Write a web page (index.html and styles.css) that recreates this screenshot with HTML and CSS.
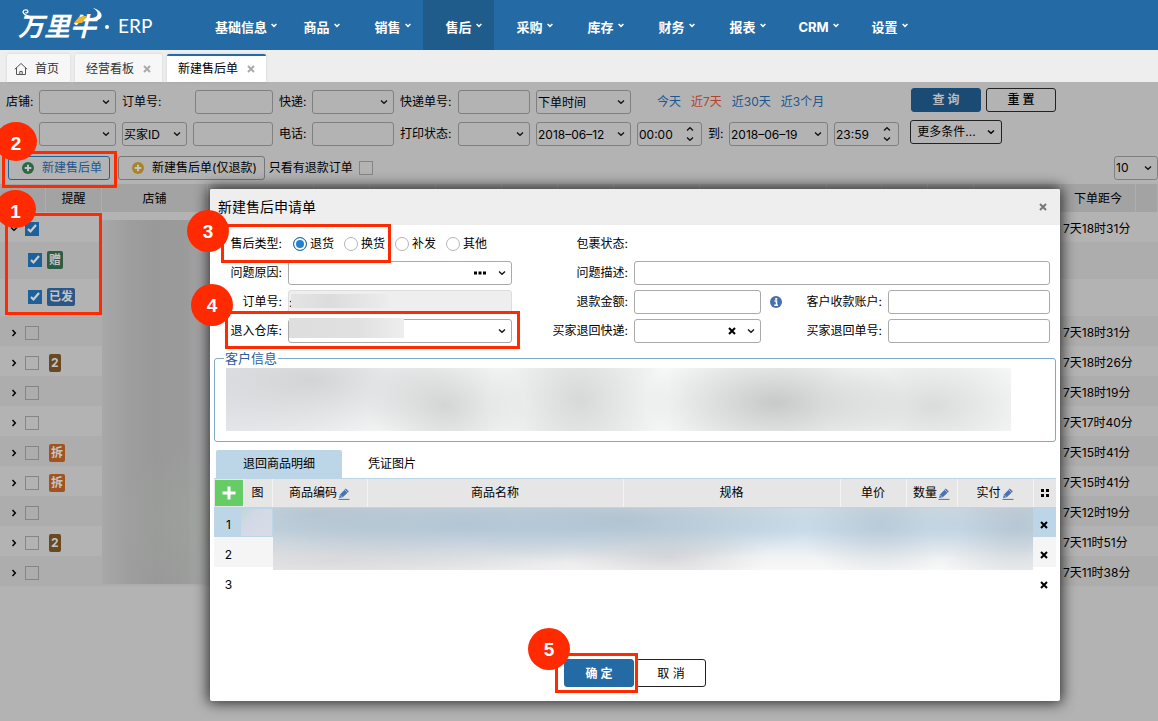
FILE: index.html
```html
<!DOCTYPE html>
<html lang="zh-CN">
<head>
<meta charset="utf-8">
<meta name="viewport" content="width=device-width, initial-scale=1">
<title>万里牛 ERP</title>
<link rel="stylesheet" href="styles.css">
</head>
<body>
<svg class="defs" aria-hidden="true">
  <symbol id="caret" viewBox="0 0 6 5"><path d="M.6 1 3 3.4 5.4 1" fill="none" stroke="currentColor" stroke-width="1.5"/></symbol>
  <symbol id="right" viewBox="0 0 8 8"><path d="M2.5 1 5.3 4 2.5 7" fill="none" stroke="currentColor" stroke-width="1.5"/></symbol>
  <symbol id="down" viewBox="0 0 8 8"><path d="M1 2.5 4 5.3 7 2.5" fill="none" stroke="currentColor" stroke-width="1.4"/></symbol>
  <symbol id="cross" viewBox="0 0 8 8"><path d="M1 1 7 7M7 1 1 7" fill="none" stroke="currentColor" stroke-width="2"/></symbol>
  <symbol id="add" viewBox="0 0 12 12"><circle cx="6" cy="6" r="6" fill="currentColor"/><path d="M6 2.7V9.3M2.7 6H9.3" stroke="#c4c4c4" stroke-width="2"/></symbol>
  <symbol id="pen" viewBox="0 0 12 12"><path d="M1 10 2 6.6 7.8.6 10.9 3.6 4.8 9.3Z" fill="#4a72b0"/><path d="M2.6 7.3 4 8.8M7 2 9.600 4.600" stroke="#e6e6e6" stroke-width=".7"/><path d="M.5 11.400H11.500" stroke="#4a72b0" stroke-width="1"/></symbol>
</svg>

<header class="topbar">
  <a class="logo" href="#">
    <span class="logo-mark">万里牛<svg class="horn" viewBox="0 0 86 32" aria-hidden="true"><path d="M14 8C9 7 5 5.500 5 2.800 5.300.4 9.800.4 10 2.600 10 4 8 4.300 7.500 3.300" fill="none" stroke="#fff" stroke-width="1.300"/><path d="M75-1C80 0 84.500 4 83.500 7.500 82.500 11.500 77 12 70 11.500L71 8.800C76 9.200 79 8 79.500 5.500 80 3 78 .8 75-1Z" fill="#fff"/><path d="M56 14 60.500 8.500C63 7 66 7 69 7L64 14Z" fill="#eeb534"/></svg></span>
    <span class="logo-dot"></span>
    <span class="logo-erp">ERP</span>
  </a>
  <nav class="nav">
    <a href="#">基础信息<svg><use href="#caret"/></svg></a>
    <a href="#">商品<svg><use href="#caret"/></svg></a>
    <a href="#">销售<svg><use href="#caret"/></svg></a>
    <a href="#" class="on">售后<svg><use href="#caret"/></svg></a>
    <a href="#">采购<svg><use href="#caret"/></svg></a>
    <a href="#">库存<svg><use href="#caret"/></svg></a>
    <a href="#">财务<svg><use href="#caret"/></svg></a>
    <a href="#">报表<svg><use href="#caret"/></svg></a>
    <a href="#">CRM<svg><use href="#caret"/></svg></a>
    <a href="#">设置<svg><use href="#caret"/></svg></a>
  </nav>
</header>

<div class="tabs">
  <a class="tab home" href="#"><svg viewBox="0 0 14 14"><path d="M.8 7.200 7 1.500 13.200 7.200M2.500 6V12.500H11.500V6M5.800 12.500V9.500H8.200V12.500" fill="none" stroke="#555" stroke-width="1"/></svg>首页</a>
  <a class="tab" href="#">经营看板<svg class="x"><use href="#cross"/></svg></a>
  <a class="tab current" href="#">新建售后单<svg class="x"><use href="#cross"/></svg></a>
</div>

<main class="page">
  <form class="filters">
    <div class="fields">
      <div class="row">
        <label class="w27" for="shop">店铺:</label><select class="w77" id="shop"></select>
        <label class="w67" for="order">订单号:</label><input class="w78" id="order" type="text">
        <label class="w27" for="express">快递:</label><select class="w82" id="express"></select>
        <label class="w52" for="expno">快递单号:</label><input class="w72" id="expno" type="text">
        <select class="w95" aria-label="时间类型"><option>下单时间</option></select>
        <div class="quick"><a href="#">今天</a><a href="#" class="hot">近7天</a><a href="#">近30天</a><a href="#">近3个月</a></div>
      </div>
      <div class="row">
        <select class="w77 indent" aria-label="标记"></select>
        <select class="w65" aria-label="买家"><option>买家ID</option></select><input class="w80" type="text" aria-label="买家ID">
        <label class="w27" for="tel">电话:</label><input class="w82" id="tel" type="text">
        <label class="w52" for="print">打印状态:</label><select class="w72" id="print"></select>
        <input class="date w95" type="text" value="2018–06–12" aria-label="开始日期">
        <input class="time w65" type="text" value="00:00" aria-label="开始时间">
        <label class="w15" for="to">到:</label><input class="date w99" id="to" type="text" value="2018–06–19">
        <input class="time w65" type="text" value="23:59" aria-label="结束时间">
      </div>
    </div>
    <div class="actions">
      <div class="pair"><button type="button" class="btn solid">查 询</button><button type="button" class="btn">重 置</button></div>
      <button type="button" class="btn more">更多条件...<svg><use href="#down"/></svg></button>
    </div>
  </form>

  <div class="tools">
    <button type="button" class="tool primary"><svg><use href="#add"/></svg>新建售后单</button>
    <button type="button" class="tool"><svg><use href="#add"/></svg>新建售后单(仅退款)</button>
    <label class="only">只看有退款订单<input class="check" type="checkbox"></label>
    <select class="size" aria-label="每页条数"><option>10</option></select>
  </div>

  <div class="grid-wrap">
    <table class="grid">
      <colgroup><col class="c45"><col class="c56"><col class="c106"><col class="c106"><col class="c56"><col class="c66"><col class="c66"><col class="c56"><col class="c56"><col class="c86"><col class="c127"><col class="c55"><col class="c46"><col class="c46"><col class="c87"><col class="c75"><col></colgroup>
      <thead><tr><th></th><th>提醒</th><th>店铺</th><th></th><th></th><th></th><th></th><th></th><th></th><th></th><th></th><th></th><th></th><th></th><th></th><th>下单距今</th><th></th></tr></thead>
      <tbody>
        <tr><td><div class="pick"><svg><use href="#down"/></svg><input class="check" type="checkbox" checked aria-label="选择"></div></td><td></td><td colspan="13"></td><td class="age">7天18时31分</td><td></td></tr>
        <tr class="sub"><td><div class="pick"><input class="check" type="checkbox" checked aria-label="选择"></div></td><td><span class="tag gift">赠</span></td><td colspan="13"></td><td></td><td></td></tr>
        <tr class="sub"><td><div class="pick"><input class="check" type="checkbox" checked aria-label="选择"></div></td><td><span class="tag sent">已发</span></td><td colspan="13"></td><td></td><td></td></tr>
        <tr><td><div class="pick"><svg><use href="#right"/></svg><input class="check" type="checkbox" aria-label="选择"></div></td><td></td><td colspan="13"></td><td class="age">7天18时31分</td><td></td></tr>
        <tr><td><div class="pick"><svg><use href="#right"/></svg><input class="check" type="checkbox" aria-label="选择"></div></td><td><span class="tag two">2</span></td><td colspan="13"></td><td class="age">7天18时26分</td><td></td></tr>
        <tr><td><div class="pick"><svg><use href="#right"/></svg><input class="check" type="checkbox" aria-label="选择"></div></td><td></td><td colspan="13"></td><td class="age">7天18时19分</td><td></td></tr>
        <tr><td><div class="pick"><svg><use href="#right"/></svg><input class="check" type="checkbox" aria-label="选择"></div></td><td></td><td colspan="13"></td><td class="age">7天17时40分</td><td></td></tr>
        <tr><td><div class="pick"><svg><use href="#right"/></svg><input class="check" type="checkbox" aria-label="选择"></div></td><td><span class="tag split">拆</span></td><td colspan="13"></td><td class="age">7天15时41分</td><td></td></tr>
        <tr><td><div class="pick"><svg><use href="#right"/></svg><input class="check" type="checkbox" aria-label="选择"></div></td><td><span class="tag split">拆</span></td><td colspan="13"></td><td class="age">7天15时41分</td><td></td></tr>
        <tr><td><div class="pick"><svg><use href="#right"/></svg><input class="check" type="checkbox" aria-label="选择"></div></td><td></td><td colspan="13"></td><td class="age">7天12时19分</td><td></td></tr>
        <tr><td><div class="pick"><svg><use href="#right"/></svg><input class="check" type="checkbox" aria-label="选择"></div></td><td><span class="tag two">2</span></td><td colspan="13"></td><td class="age">7天11时51分</td><td></td></tr>
        <tr><td><div class="pick"><svg><use href="#right"/></svg><input class="check" type="checkbox" aria-label="选择"></div></td><td></td><td colspan="13"></td><td class="age">7天11时38分</td><td></td></tr>
      </tbody>
    </table>
    <div class="shop-mask"></div>
  </div>
</main>

<section class="dialog" role="dialog" aria-labelledby="dlg-title">
  <header class="dialog-head"><h1 id="dlg-title">新建售后申请单</h1><button type="button" class="icon-btn" aria-label="关闭"><svg><use href="#cross"/></svg></button></header>
  <form class="form">
    <span class="lab">售后类型:</span>
    <div class="radios">
      <label><input type="radio" name="kind" checked>退货</label>
      <label><input type="radio" name="kind">换货</label>
      <label><input type="radio" name="kind">补发</label>
      <label><input type="radio" name="kind">其他</label>
    </div>
    <span class="lab">包裹状态:</span><span class="span3"></span>

    <label class="lab" for="reason">问题原因:</label>
    <div class="combo"><select id="reason"></select><svg class="dots" viewBox="0 0 12 4"><path d="M0 .5h3v3H0zM4.500.500h3v3h-3zM9 .5h3v3H9z"/></svg></div>
    <label class="lab" for="desc">问题描述:</label><input class="span3" id="desc" type="text">

    <label class="lab" for="ono">订单号:</label>
    <div class="combo"><input id="ono" type="text" value=":" readonly><span class="mask order-mask"></span></div>
    <label class="lab" for="refund">退款金额:</label><input id="refund" type="text">
    <div class="lab with-info"><svg class="info" viewBox="0 0 12 12"><circle cx="6" cy="6" r="6" fill="#4470ae"/><path d="M4.500 5H6.500V9M4.200 9.200H8" fill="none" stroke="#fff" stroke-width="1.500"/><path d="M5.200 2H7.200V3.800H5.200Z" fill="#fff"/></svg><label for="acct">客户收款账户:</label></div><input id="acct" type="text">

    <label class="lab" for="store">退入仓库:</label>
    <div class="combo"><select id="store"></select><span class="mask store-mask"></span></div>
    <label class="lab" for="back">买家退回快递:</label>
    <div class="combo"><select id="back"></select><svg class="clear"><use href="#cross"/></svg></div>
    <label class="lab" for="backno">买家退回单号:</label><input id="backno" type="text">
  </form>

  <fieldset class="customer"><legend>客户信息</legend><div class="customer-mask"></div></fieldset>

  <div class="subtabs"><button type="button" class="on">退回商品明细</button><button type="button">凭证图片</button></div>
  <div class="items-wrap">
    <table class="items">
      <colgroup><col class="i29"><col class="i29"><col class="i95"><col><col class="i217"><col class="i66"><col class="i51"><col class="i76"><col class="i23"></colgroup>
      <thead><tr>
        <th class="plus"><button type="button" aria-label="添加"><svg viewBox="0 0 14 14"><path d="M7 .5V13.500M.5 7H13.500" stroke="#fff" stroke-width="3"/></svg></button></th>
        <th>图</th><th>商品编码<svg class="pen"><use href="#pen"/></svg></th><th>商品名称</th><th>规格</th><th>单价</th><th>数量<svg class="pen"><use href="#pen"/></svg></th><th>实付<svg class="pen"><use href="#pen"/></svg></th>
        <th><svg class="cols" viewBox="0 0 8 8"><path d="M0 0h3v3H0zM5 0h3v3H5zM0 5h3v3H0zM5 5h3v3H5z"/></svg></th>
      </tr></thead>
      <tbody>
        <tr class="sel"><td>1</td><td class="thumb"><span></span></td><td colspan="6"></td><td><button type="button" class="icon-btn" aria-label="删除"><svg><use href="#cross"/></svg></button></td></tr>
        <tr class="alt"><td>2</td><td></td><td colspan="6"></td><td><button type="button" class="icon-btn" aria-label="删除"><svg><use href="#cross"/></svg></button></td></tr>
        <tr><td>3</td><td></td><td colspan="6"></td><td><button type="button" class="icon-btn" aria-label="删除"><svg><use href="#cross"/></svg></button></td></tr>
      </tbody>
    </table>
    <div class="items-mask"></div>
  </div>
  <footer class="dialog-foot"><button type="button" class="btn solid">确 定</button><button type="button" class="btn">取 消</button></footer>
</section>

<div class="guide">
  <div class="frame f1"></div><div class="step s1">1</div>
  <div class="frame f2"></div><div class="step s2">2</div>
  <div class="frame f3"></div><div class="step s3">3</div>
  <div class="frame f4"></div><div class="step s4">4</div>
  <div class="frame f5"></div><div class="step s5">5</div>
</div>
</body>
</html>
```

FILE: styles.css
```css
* { box-sizing: border-box; }
body {
  margin: 0;
  min-height: 100vh;
  display: flex;
  flex-direction: column;
  position: relative;
  overflow: hidden;
  background: #b3b3b3;
  color: #000;
  font: 12px/18px Inter, "Noto Sans CJK SC", sans-serif;
}
button, input, select { font: inherit; color: inherit; margin: 0; }
button { cursor: pointer; }
a { color: inherit; text-decoration: none; }
.defs { position: absolute; width: 0; height: 0; }

/* Top bar */
.topbar { display: flex; height: 50px; background: #246ba5; color: #fff; }
.logo { display: flex; align-items: center; width: 201px; padding-left: 18px; }
.logo-mark { position: relative; width: 86px; font: italic 700 26px/32px "Noto Sans CJK SC", sans-serif; white-space: nowrap; }
.horn { position: absolute; left: 0; top: 0; width: 86px; height: 32px; overflow: visible; }
.logo-dot { width: 4px; height: 4px; margin: 3px 9px 0 1px; border-radius: 50%; background: #fff; }
.logo-erp { padding-top: 2px; font: 19px/24px Lato, sans-serif; }
.nav { display: flex; }
.nav a {
  display: flex;
  align-items: center;
  justify-content: center;
  gap: 4px;
  min-width: 71px;
  padding: 4px 4px 0 14px;
  font-size: 13px;
  font-weight: 700;
}
.nav .on { background: #1f5c8b; }
.nav svg { width: 6px; height: 5px; margin-bottom: 4px; }

/* Page tabs */
.tabs { display: flex; gap: 5px; height: 32px; padding: 4px 0 0 7px; background: #eee; }
.tab {
  display: flex;
  align-items: center;
  gap: 9px;
  padding: 0 11px;
  border-top: 2px solid #f7f7f7;
  border-radius: 2px 2px 0 0;
  background: #f7f7f7;
  color: #333;
  box-shadow: 0 0 3px rgba(0, 0, 0, .12);
}
.tab.home { gap: 7px; padding: 0 11px 0 7px; }
.tab.home svg { width: 14px; height: 14px; }
.tab.current { border-top-color: #246ba5; background: #fff; color: #000; }
.tab .x { width: 8px; height: 8px; color: #aaa; }

/* Filters */
.page { flex: 1; padding-top: 6px; }
.filters { display: flex; }
.fields { flex: 0 0 910px; display: flex; flex-direction: column; gap: 8px; padding: 2px 0 0 6px; }
.row { display: flex; align-items: center; gap: 6px; height: 24px; }
.row label { white-space: nowrap; }
select, input[type="text"] {
  appearance: none;
  min-width: 0;
  height: 24px;
  padding: 0 1px;
  border: 1px solid #808080;
  border-radius: 3px;
  background-color: transparent;
  outline: 0;
}
select, .date {
  background: url("data:image/svg+xml,%3Csvg xmlns='http://www.w3.org/2000/svg' width='8' height='8'%3E%3Cpath d='M1 2.500 4 5.300 7 2.500' fill='none' stroke='%23111' stroke-width='1.300'/%3E%3C/svg%3E") no-repeat right 5px center;
}
.time {
  background: url("data:image/svg+xml,%3Csvg xmlns='http://www.w3.org/2000/svg' width='8' height='16'%3E%3Cpath d='M1 4.500 4 1.700 7 4.500M1 11.500 4 14.300 7 11.500' fill='none' stroke='%23111' stroke-width='1.300'/%3E%3C/svg%3E") no-repeat right 7px center;
}
.row select, .row .date { padding-top: 1px; }
.indent { margin-left: 33px; }
.w15 { width: 15px; }
.w27 { width: 27px; }
.w52 { width: 52px; }
.w65 { width: 65px; }
.w67 { width: 67px; }
.w72 { width: 72px; }
.w77 { width: 77px; }
.w78 { width: 78px; }
.w80 { width: 80px; }
.w82 { width: 82px; }
.w95 { width: 95px; }
.w99 { width: 99px; }
.quick { display: flex; gap: 10px; margin-left: 20px; color: #1f568e; }
.quick .hot { color: #b3432b; }
.actions { display: flex; flex-direction: column; align-items: flex-start; gap: 8px; }
.pair { display: flex; gap: 5px; padding-left: 1px; }
.btn {
  width: 70px;
  height: 24px;
  padding: 0;
  border: 1px solid #222;
  border-radius: 3px;
  background: transparent;
}
.pair .btn { font-weight: 500; }
.pair .solid { border-color: #194b74; background: #194b74; color: #bbb; font-weight: 700; }
.btn.more { display: flex; align-items: center; justify-content: center; gap: 11px; width: 92px; }
.btn svg { width: 8px; height: 8px; }

/* Toolbar */
.tools { display: flex; align-items: center; height: 28px; margin: 10px 0 0; padding: 0 0 4px 8px; }
.tool {
  display: flex;
  align-items: center;
  gap: 8px;
  height: 24px;
  margin-right: 8px;
  padding: 0 7px 0 13px;
  border: 1px solid #777;
  border-radius: 3px;
  background: transparent;
}
.tool svg { width: 12px; height: 12px; color: #a88524; }
.tool + .tool { margin-right: 4px; }
.tool.primary { border-color: #246194; color: #1c5791; }
.tool.primary svg { color: #2d6746; }
.tools .only { display: flex; align-items: center; gap: 6px; }
.size { width: 44px; margin-left: auto; }
.check {
  appearance: none;
  flex: none;
  width: 14px;
  height: 14px;
  border: 1px solid #858585;
  background: transparent;
}
.check:checked {
  border-color: #1d609a;
  background: #1d609a url("data:image/svg+xml,%3Csvg xmlns='http://www.w3.org/2000/svg' width='12' height='12'%3E%3Cpath d='M2 6 4.500 8.500 10 2' fill='none' stroke='%23ccc' stroke-width='2.200'/%3E%3C/svg%3E") center;
}

/* Order list */
.grid-wrap { position: relative; }
.grid { width: 100%; border-collapse: collapse; table-layout: fixed; }
.grid th { height: 28px; padding: 1px 0 0 1px; border-right: 1px solid #aeaeae; background: #a3a3a3; font-weight: 400; }
.grid td { height: 30px; padding: 3px 0 0; }
.grid .sub td { height: 37px; padding: 0 0 2px; }
.grid tbody tr:nth-child(even) { background: #adadad; }
.grid .age { padding: 4px 0 0 3px; white-space: nowrap; }
.c45 { width: 45px; }
.c46 { width: 46px; }
.c55 { width: 55px; }
.c56 { width: 56px; }
.c66 { width: 66px; }
.c75 { width: 75px; }
.c86 { width: 86px; }
.c87 { width: 87px; }
.c106 { width: 106px; }
.c127 { width: 127px; }
.pick { display: flex; align-items: center; gap: 7px; padding-left: 10px; }
.pick svg { width: 8px; height: 8px; }
.sub .pick { padding-left: 28px; }
.tag {
  display: block;
  width: max-content;
  margin-left: 4px;
  padding: 0 2px;
  border-radius: 2px;
  color: #c4c4c4;
  font-size: 12px;
  font-weight: 700;
}
.sub .tag { margin-left: 2px; }
.gift { background: #2c5c41; }
.sent { background: #2a5788; }
.two { background: #694922; }
.split { background: #a35320; }
.shop-mask {
  position: absolute;
  left: 102px;
  top: 36px;
  width: 107px;
  height: 364px;
  background:
    radial-gradient(ellipse 90px 70px at 100px 300px, rgba(160, 175, 160, .3), transparent),
    linear-gradient(90deg, #a8a8a8, #9e9e9e 25%, #999 50%, #9b9b9b 80%, #adadb0);
}

/* Dialog */
.dialog {
  position: absolute;
  left: 210px;
  top: 189px;
  width: 850px;
  min-height: 512px;
  display: flex;
  flex-direction: column;
  border-radius: 2px;
  background: #fff;
  box-shadow: 0 0 14px 2px rgba(0, 0, 0, .75);
}
.dialog-head { display: flex; align-items: center; justify-content: space-between; height: 36px; padding: 0 13px 0 8px; border-radius: 2px 2px 0 0; background: #eee; color: #777; }
.dialog-head h1 { margin: 0; color: #000; font-size: 14px; font-weight: 400; }
.icon-btn { display: inline-flex; padding: 0; border: 0; background: none; }
.icon-btn svg { width: 8px; height: 8px; }
.form {
  display: grid;
  grid-template-columns: 72px 224px 110px 127px 115px 1fr;
  grid-auto-rows: 24px;
  gap: 5px 6px;
  padding: 7px 10px 0 0;
  align-items: center;
}
.form select, .form input[type="text"] { width: 100%; border-color: #aaa; }
.lab { text-align: right; white-space: nowrap; }
.span3 { grid-column: span 3; }
.with-info { display: flex; align-items: center; justify-content: space-between; padding-left: 3px; }
.info { width: 12px; height: 12px; }
.radios { display: flex; gap: 9px; padding-left: 5px; }
.radios label { display: flex; align-items: center; gap: 3px; }
.radios input { appearance: none; width: 14px; height: 14px; margin: 0; border: 1px solid #b5b5b5; border-radius: 50%; }
.radios label + label { padding-left: 1px; }
.radios input:checked { border-color: #246ba5; background: #2380cc; box-shadow: inset 0 0 0 2px #fff; }
.combo { position: relative; display: flex; }
.form .combo input[readonly] { border-color: #ddd; background: #eee; padding: 0; }
.dots { position: absolute; right: 26px; top: 10px; width: 12px; height: 4px; }
.clear { position: absolute; right: 25px; top: 8px; width: 8px; height: 8px; }
.mask { position: absolute; }
.order-mask { left: 3px; top: 4px; width: 97px; height: 14px; background: linear-gradient(90deg, #e4e4e4, #dcdcdc 40%, #ececec); }
.store-mask { top: -1px; left: 1px; width: 115px; height: 20px; background: linear-gradient(90deg, #dedede, #e0e0e0 60%, #eee); }
.customer { min-width: 0; margin: 6px 4px 0; padding: 1px 44px 10px 11px; border: 1px solid #7dabcb; border-radius: 3px; }
.customer legend { margin-left: -2px; padding: 0 1px; color: #2c5c9c; font-size: 13px; line-height: 18px; }
.customer-mask {
  height: 63px;
  background:
    radial-gradient(ellipse 150px 60px at 11% 20%, rgba(190, 190, 192, .55), transparent),
    radial-gradient(ellipse 80px 60px at 28% 60%, rgba(190, 190, 190, .6), transparent),
    radial-gradient(ellipse 90px 90px at 45% 50%, rgba(190, 190, 190, .55), transparent),
    radial-gradient(ellipse 130px 60px at 70% 55%, rgba(175, 175, 175, .65), transparent),
    radial-gradient(ellipse 110px 60px at 90% 60%, rgba(195, 195, 195, .55), transparent),
    linear-gradient(90deg, #e4e5e9, #f5f7f7 20%, #f7f8f8);
}
.subtabs { display: flex; margin: 8px 6px 0; }
.subtabs button { height: 28px; padding: 0 26px; border: 0; background: transparent; }
.subtabs .on { padding: 0 27px; border-radius: 2px 2px 0 0; background: #bcd5e7; }
.items-wrap { position: relative; margin: 0 4px; border-top: 1px solid #bcd5e7; }
.items { width: 100%; border-collapse: collapse; table-layout: fixed; text-align: center; }
.items th { height: 28px; padding: 0; border-right: 1px solid #f4f4f4; background: #e6e6e6; font-weight: 400; white-space: nowrap; }
.items th:last-child { border-right: 0; }
.items td { height: 30px; padding: 5px 0 0; }
.items td:last-child { padding-right: 1px; }
.items .plus button { display: block; width: 28px; height: 26px; padding: 0; border: 0; margin-left: 1px; background: #66cc66; line-height: 0; }
.plus svg { width: 14px; height: 14px; }
.items .thumb { padding: 1px 0 0; }
.thumb span { display: block; height: 27px; margin-left: -2px; background: linear-gradient(135deg, #bcd9d6, #d2d9e5 35%, #d9dce8); }
.sel { background: #bcd5e7; }
.alt { background: #f5f5f5; }
.pen { width: 12px; height: 12px; margin-left: 1px; vertical-align: -3px; }
.cols { width: 8px; height: 8px; }
.i23 { width: 23px; }
.i29 { width: 29px; }
.i51 { width: 51px; }
.i66 { width: 66px; }
.i76 { width: 76px; }
.i95 { width: 95px; }
.i217 { width: 217px; }
.items-mask {
  position: absolute;
  left: 59px;
  right: 23px;
  top: 29px;
  height: 62px;
  background:
    radial-gradient(ellipse 200px 45px at 6% 10%, rgba(165, 180, 192, .5), transparent),
    radial-gradient(ellipse 200px 45px at 25% 25%, rgba(165, 185, 202, .5), transparent),
    radial-gradient(ellipse 200px 45px at 46% 20%, rgba(160, 178, 192, .55), transparent),
    radial-gradient(ellipse 80px 60px at 80% 25%, rgba(165, 182, 196, .45), transparent),
    radial-gradient(ellipse 90px 80px at 98% 25%, rgba(165, 178, 190, .5), transparent),
    radial-gradient(ellipse 330px 40px at 8% 85%, rgba(200, 200, 203, .6), transparent),
    radial-gradient(ellipse 100px 35px at 52% 80%, rgba(200, 200, 203, .6), transparent),
    linear-gradient(#d0dce5, #c8dcea 35%, #dbe6ef 55%, #f2f3f4 80%, #f8f8f8);
}
.dialog-foot { display: flex; justify-content: center; gap: 2px; margin-top: auto; padding-bottom: 14px; }
.dialog-foot .btn { height: 28px; padding: 1px 0 0; }
.dialog-foot .solid { border-color: #246ba5; background: #246ba5; color: #fff; font-weight: 700; }

/* Walkthrough markers */
.frame { position: absolute; border: 3px solid #ff2a00; }
.step {
  position: absolute;
  width: 42px;
  height: 42px;
  border-radius: 50%;
  background: #ff2a00;
  color: #fff;
  font: 700 19px/43px "Liberation Sans", Arial, sans-serif;
  text-align: center;
}
.f1 { left: 5px; top: 213px; width: 97px; height: 102px; }
.f2 { left: 2px; top: 151px; width: 115px; height: 37px; }
.f3 { left: 221px; top: 224px; width: 170px; height: 39px; }
.f4 { left: 225px; top: 311px; width: 295px; height: 38px; }
.f5 { left: 555px; top: 653px; width: 83px; height: 40px; }
.s1 { left: -5px; top: 190px; width: 41px; height: 38px; }
.s2 { left: -5px; top: 122px; height: 39px; }
.s3 { left: 187px; top: 210px; }
.s4 { left: 191px; top: 284px; }
.s5 { left: 528px; top: 628px; }
```
